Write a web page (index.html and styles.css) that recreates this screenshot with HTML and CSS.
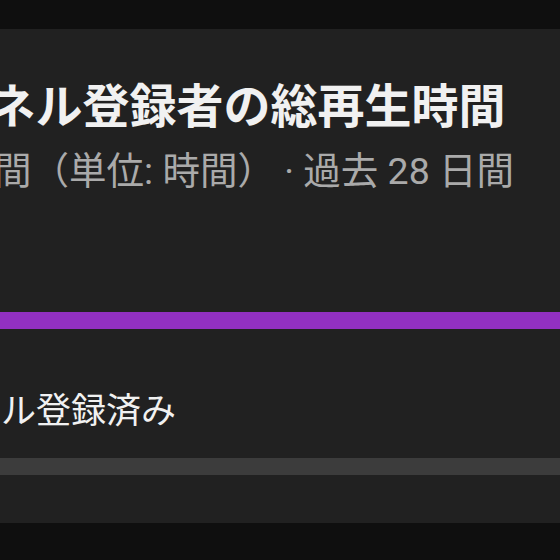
FILE: index.html
```html
<!DOCTYPE html>
<html lang="ja">
<head>
    <meta charset="UTF-8">
    <meta name="viewport" content="width=device-width, initial-scale=1.0">
    <title>総再生時間</title>
    <link rel="stylesheet" href="styles.css">
</head>
<body>
    <div class="card">
        <div class="card-body">
            <h1 class="card-title">チャンネル登録者の総再生時間</h1>
            <p class="card-sub">総再生時間（単位: 時間） · 過去 28 日間</p>

            <div class="bar bar-subscribed"></div>
            <div class="bar-label">チャンネル登録済み</div>
            <div class="bar bar-other"></div>
        </div>
    </div>
</body>
</html>
```

FILE: styles.css
```css
body {
    margin: 0;
    background-color: #0f0f0f;
    font-family: Roboto, "Noto Sans CJK JP", sans-serif;
    overflow: hidden;
    height: 560px;
}
.card {
    margin-top: 29px;
    background-color: #212121;
    height: 494px;
    overflow: hidden;
}
.card-body {
    padding-top: 50px;
}
.card-title,
.card-sub,
.bar-label {
    margin: 0;
    white-space: nowrap;
}
.card-title {
    margin-left: -151px;
    font-size: 47px;
    line-height: 56px;
    font-weight: bold;
    color: #f1f1f1;
}
.card-sub {
    margin-left: -156px;
    margin-top: 13px;
    font-size: 37.5px;
    line-height: 46px;
    color: #aaaaaa;
}
.bar {
    height: 17px;
}
.bar-subscribed {
    margin-top: 118px;
    background-color: #9230c2;
}
.bar-label {
    margin-left: -138px;
    margin-top: 61px;
    font-size: 35px;
    line-height: 44px;
    color: #f1f1f1;
}
.bar-other {
    margin-top: 24px;
    background-color: #3c3c3c;
}
```
